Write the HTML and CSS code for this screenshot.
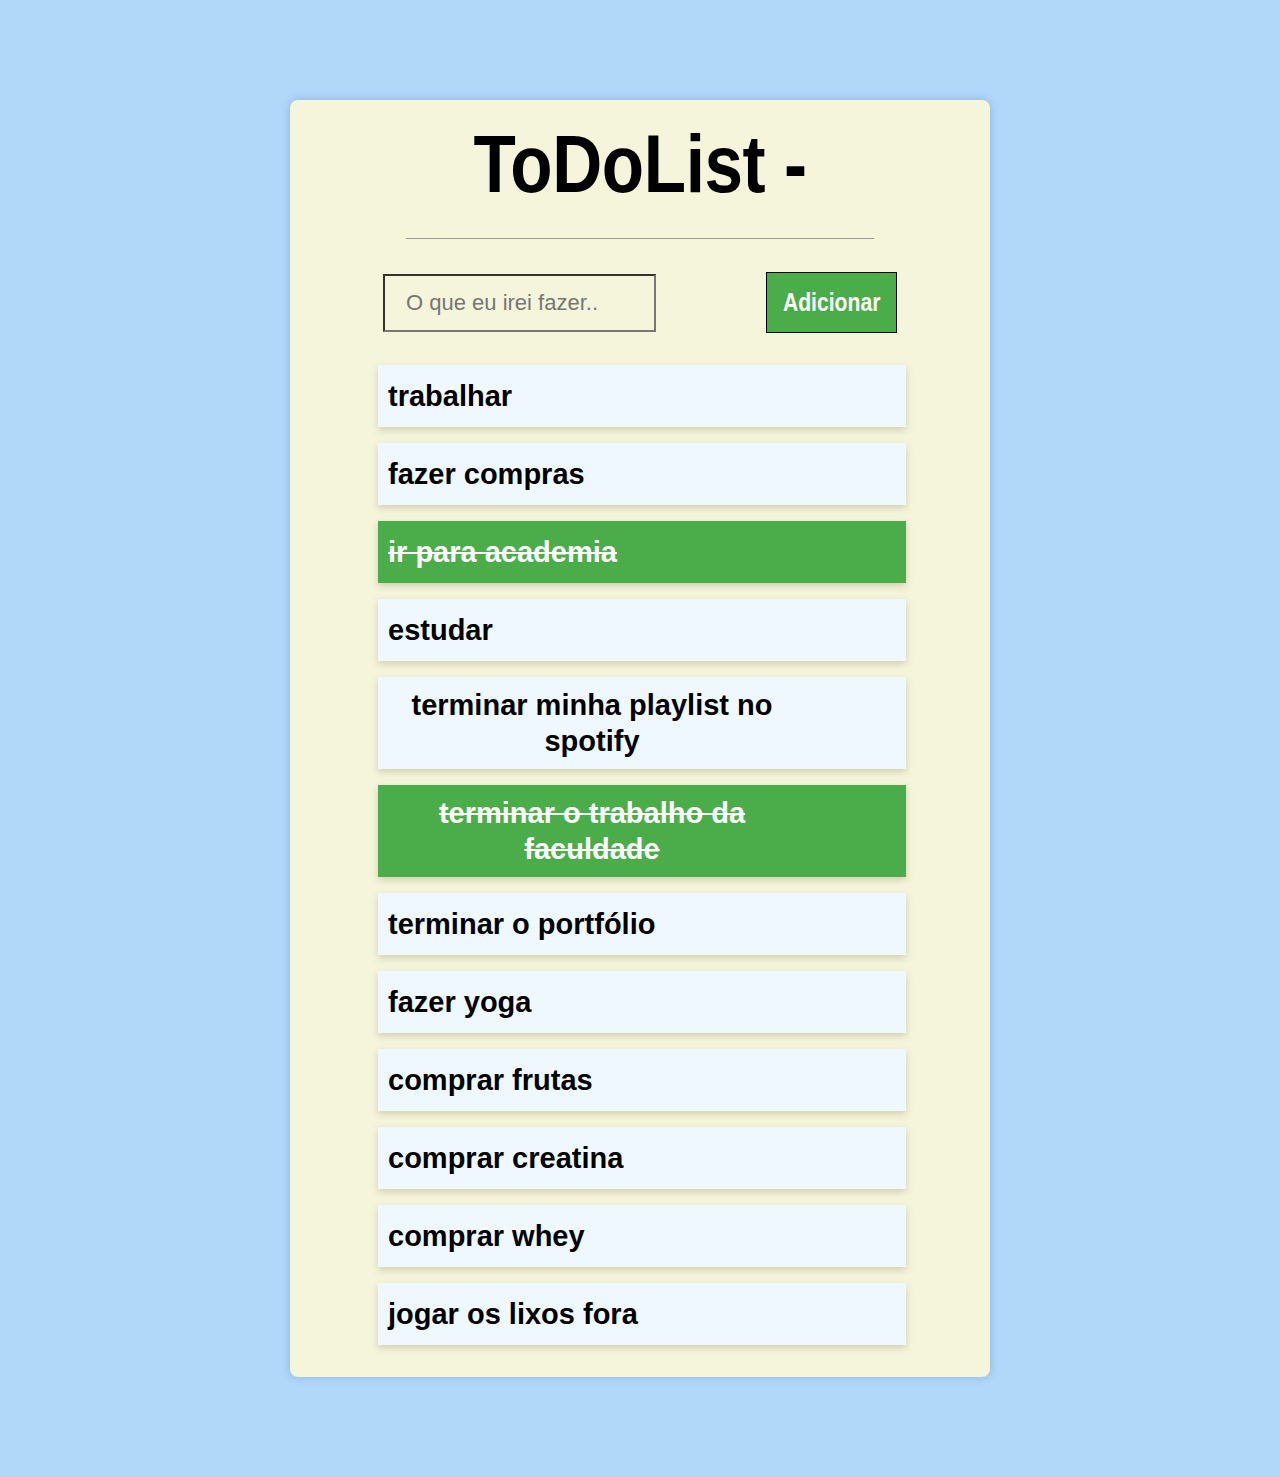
FILE: index.html
```html
<!DOCTYPE html>
<html lang="pt-BR">
<head>
<meta charset="utf-8">
<title>ToDoList</title>
<link rel="stylesheet" href="styles.css">
</head>
<body>
<main class="card">
  <h1 class="title"><span class="condensed">ToDoList -</span></h1>
  <div class="divider"></div>
  <form class="add-row">
    <input class="task-input" type="text" placeholder="O que eu irei fazer..">
    <button class="add-btn" type="button"><span class="condensed">Adicionar</span></button>
  </form>
  <ul class="list">
    <li class="item"><span class="text">trabalhar</span></li>
    <li class="item"><span class="text">fazer compras</span></li>
    <li class="item done"><span class="text">ir para academia</span></li>
    <li class="item"><span class="text">estudar</span></li>
    <li class="item"><span class="text">terminar minha playlist no spotify</span></li>
    <li class="item done"><span class="text">terminar o trabalho da faculdade</span></li>
    <li class="item"><span class="text">terminar o portfólio</span></li>
    <li class="item"><span class="text">fazer yoga</span></li>
    <li class="item"><span class="text">comprar frutas</span></li>
    <li class="item"><span class="text">comprar creatina</span></li>
    <li class="item"><span class="text">comprar whey</span></li>
    <li class="item"><span class="text">jogar os lixos fora</span></li>
  </ul>
</main>
</body>
</html>
```
FILE: styles.css
```css
html, body {
  margin: 0;
  padding: 0;
}
body {
  background: #b1d7f9;
  padding: 100px 0 100px;
  font-family: "Liberation Sans", Arial, sans-serif;
}
.card {
  width: 700px;
  margin: 0 auto;
  background: #f5f5dc;
  border-radius: 8px;
  box-shadow: 0 0 8px rgba(40, 80, 130, 0.25);
  padding: 17px 0 32px;
  box-sizing: border-box;
}
.condensed {
  display: inline-block;
  transform: scaleX(0.845);
  transform-origin: center;
}
.title {
  margin: 0;
  text-align: center;
  font-family: "Liberation Sans", Arial, sans-serif;
  font-weight: 700;
  font-size: 82px;
  line-height: 94px;
  color: #000;
  letter-spacing: -0.5px;
}
.divider {
  width: 468px;
  height: 1px;
  background: #9a9a9a;
  margin: 27px auto 0;
}
.add-row {
  width: 514px;
  margin: 33px auto 0;
  display: flex;
  justify-content: space-between;
  align-items: center;
}
.task-input {
  width: 273px;
  height: 58px;
  box-sizing: border-box;
  border: 2px solid;
  border-color: #333 #777 #777 #333;
  background: #f5f5dc;
  padding: 0 0 0 21px;
  font-family: "Liberation Sans", Arial, sans-serif;
  font-size: 22px;
  color: #333;
  outline: none;
}
.task-input::placeholder {
  color: #757575;
}
.add-btn {
  width: 131px;
  height: 61px;
  box-sizing: border-box;
  background: #4aad4a;
  border: 1px solid #000;
  color: #fff;
  font-family: "Liberation Sans", Arial, sans-serif;
  font-weight: 700;
  font-size: 25px;
  padding: 0;
  white-space: nowrap;
}
.list {
  list-style: none;
  margin: 32px 0 0 88px;
  padding: 0;
  width: 528px;
  display: flex;
  flex-direction: column;
  gap: 16px;
}
.item {
  display: flex;
  align-items: center;
  min-height: 42px;
  padding: 10px;
  background: #f0f8ff;
  box-shadow: 0 3px 7px rgba(120, 110, 60, 0.28);
}
.text {
  max-width: 408px;
  text-align: center;
  font-weight: 700;
  font-size: 29px;
  line-height: 36px;
  color: #000;
}
.item.done {
  background: #4aad4a;
}
.item.done .text {
  color: #fff;
  text-decoration: line-through;
}
```
